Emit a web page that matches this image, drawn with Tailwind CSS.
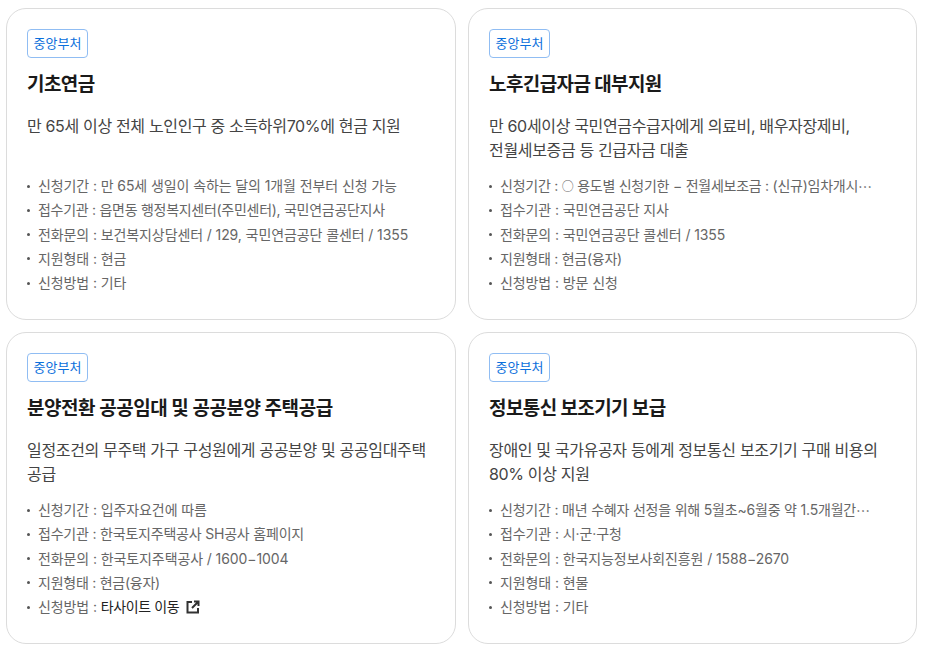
<!DOCTYPE html>
<html lang="ko">
<head>
<meta charset="utf-8">
<title>복지 서비스 목록</title>
<script src="https://cdn.jsdelivr.net/npm/@tailwindcss/browser@4"></script>
</head>
<body class="bg-white font-['Inter','Noto_Sans_CJK_KR',sans-serif] overflow-hidden">
<div class="grid grid-cols-[450px_449px] gap-3 pl-1.5 pt-2">

  <!-- Card 1 -->
  <div class="h-[312px] rounded-[20px] border border-[#dcdcdc] px-5 pt-5">
    <span class="block h-[29px] w-[61px] rounded border border-[#90bdf3] text-center text-[13px] leading-[26px] text-[#0b6fdc]">중앙부처</span>
    <h3 class="mt-[13px] text-[19px] leading-[28px] font-bold tracking-[-0.6px] text-[#1a1a1a]">기초연금</h3>
    <p class="mt-[15px] h-[48px] text-base leading-6 tracking-[-0.34px] text-[#444]">만 65세 이상 전체 노인인구 중 소득하위70%에 현금 지원</p>
    <ul class="mt-[12px] text-sm leading-[24.25px] tracking-[-0.1px] text-[#666]">
      <li class="flex items-center"><span class="mr-2 h-[3px] w-[3px] rounded-full bg-[#555]"></span>신청기간 : 만 65세 생일이 속하는 달의 1개월 전부터 신청 가능</li>
      <li class="flex items-center tracking-[-0.28px]"><span class="mr-2 h-[3px] w-[3px] rounded-full bg-[#555]"></span>접수기관 : 읍면동 행정복지센터(주민센터), 국민연금공단지사</li>
      <li class="flex items-center"><span class="mr-2 h-[3px] w-[3px] rounded-full bg-[#555]"></span>전화문의 : 보건복지상담센터 / 129, 국민연금공단 콜센터 / 1355</li>
      <li class="flex items-center"><span class="mr-2 h-[3px] w-[3px] rounded-full bg-[#555]"></span>지원형태 : 현금</li>
      <li class="flex items-center"><span class="mr-2 h-[3px] w-[3px] rounded-full bg-[#555]"></span>신청방법 : 기타</li>
    </ul>
  </div>

  <!-- Card 2 -->
  <div class="h-[312px] rounded-[20px] border border-[#dcdcdc] px-5 pt-5">
    <span class="block h-[29px] w-[61px] rounded border border-[#90bdf3] text-center text-[13px] leading-[26px] text-[#0b6fdc]">중앙부처</span>
    <h3 class="mt-[13px] text-[19px] leading-[28px] font-bold tracking-[-0.6px] text-[#1a1a1a]">노후긴급자금 대부지원</h3>
    <p class="mt-[15px] h-[48px] text-base leading-6 tracking-[-0.34px] text-[#444]">만 60세이상 국민연금수급자에게 의료비, 배우자장제비,<br>전월세보증금 등 긴급자금 대출</p>
    <ul class="mt-[12px] text-sm leading-[24.25px] tracking-[-0.1px] text-[#666]">
      <li class="flex items-center whitespace-pre tracking-[-0.25px]"><span class="mr-2 h-[3px] w-[3px] rounded-full bg-[#555]"></span>신청기간 : <span class="font-['Noto_Sans_CJK_KR'] text-xs">○</span> 용도별 신청기한 − 전월세보조금 : (신규)임차개시<span class="font-['Noto_Sans_CJK_KR']">…</span></li>
      <li class="flex items-center"><span class="mr-2 h-[3px] w-[3px] rounded-full bg-[#555]"></span>접수기관 : 국민연금공단 지사</li>
      <li class="flex items-center"><span class="mr-2 h-[3px] w-[3px] rounded-full bg-[#555]"></span>전화문의 : 국민연금공단 콜센터 / 1355</li>
      <li class="flex items-center tracking-[-0.25px]"><span class="mr-2 h-[3px] w-[3px] rounded-full bg-[#555]"></span>지원형태 : 현금(융자)</li>
      <li class="flex items-center"><span class="mr-2 h-[3px] w-[3px] rounded-full bg-[#555]"></span>신청방법 : 방문 신청</li>
    </ul>
  </div>

  <!-- Card 3 -->
  <div class="h-[312px] rounded-[20px] border border-[#dcdcdc] px-5 pt-5">
    <span class="block h-[29px] w-[61px] rounded border border-[#90bdf3] text-center text-[13px] leading-[26px] text-[#0b6fdc]">중앙부처</span>
    <h3 class="mt-[13px] text-[19px] leading-[28px] font-bold tracking-[-0.45px] text-[#1a1a1a]">분양전환 공공임대 및 공공분양 주택공급</h3>
    <p class="mt-[15px] h-[48px] text-base leading-6 tracking-[-0.34px] text-[#444]">일정조건의 무주택 가구 구성원에게 공공분양 및 공공임대주택<br>공급</p>
    <ul class="mt-[12px] text-sm leading-[24.25px] tracking-[-0.1px] text-[#666]">
      <li class="flex items-center"><span class="mr-2 h-[3px] w-[3px] rounded-full bg-[#555]"></span>신청기간 : 입주자요건에 따름</li>
      <li class="flex items-center tracking-[-0.2px]"><span class="mr-2 h-[3px] w-[3px] rounded-full bg-[#555]"></span>접수기관 : 한국토지주택공사 SH공사 홈페이지</li>
      <li class="flex items-center"><span class="mr-2 h-[3px] w-[3px] rounded-full bg-[#555]"></span>전화문의 : 한국토지주택공사 / 1600−1004</li>
      <li class="flex items-center tracking-[-0.25px]"><span class="mr-2 h-[3px] w-[3px] rounded-full bg-[#555]"></span>지원형태 : 현금(융자)</li>
      <li class="flex items-center whitespace-pre"><span class="mr-2 h-[3px] w-[3px] rounded-full bg-[#555]"></span>신청방법 : <span class="tracking-[-0.4px] text-[#222]">타사이트 이동</span><svg class="ml-[7px] h-[14px] w-[14px] text-[#333]" fill="none" stroke="currentColor" stroke-width="2" viewBox="0 0 14 14">
          <path d="M6 2H1.5v10.5H12V8M8 1.5h4.5V6M12.5 1.5L6 8"></path>
        </svg>
      </li>
    </ul>
  </div>

  <!-- Card 4 -->
  <div class="h-[312px] rounded-[20px] border border-[#dcdcdc] px-5 pt-5">
    <span class="block h-[29px] w-[61px] rounded border border-[#90bdf3] text-center text-[13px] leading-[26px] text-[#0b6fdc]">중앙부처</span>
    <h3 class="mt-[13px] text-[19px] leading-[28px] font-bold tracking-[-0.6px] text-[#1a1a1a]">정보통신 보조기기 보급</h3>
    <p class="mt-[15px] h-[48px] text-base leading-6 tracking-[-0.34px] text-[#444]">장애인 및 국가유공자 등에게 정보통신 보조기기 구매 비용의<br>80% 이상 지원</p>
    <ul class="mt-[12px] text-sm leading-[24.25px] tracking-[-0.1px] text-[#666]">
      <li class="flex items-center whitespace-pre tracking-[-0.2px]"><span class="mr-2 h-[3px] w-[3px] rounded-full bg-[#555]"></span>신청기간 : 매년 수혜자 선정을 위해 5월초~6월중 약 1.5개월간<span class="font-['Noto_Sans_CJK_KR']">…</span></li>
      <li class="flex items-center"><span class="mr-2 h-[3px] w-[3px] rounded-full bg-[#555]"></span>접수기관 : 시·군·구청</li>
      <li class="flex items-center"><span class="mr-2 h-[3px] w-[3px] rounded-full bg-[#555]"></span>전화문의 : 한국지능정보사회진흥원 / 1588−2670</li>
      <li class="flex items-center"><span class="mr-2 h-[3px] w-[3px] rounded-full bg-[#555]"></span>지원형태 : 현물</li>
      <li class="flex items-center"><span class="mr-2 h-[3px] w-[3px] rounded-full bg-[#555]"></span>신청방법 : 기타</li>
    </ul>
  </div>

</div>
</body>
</html>
